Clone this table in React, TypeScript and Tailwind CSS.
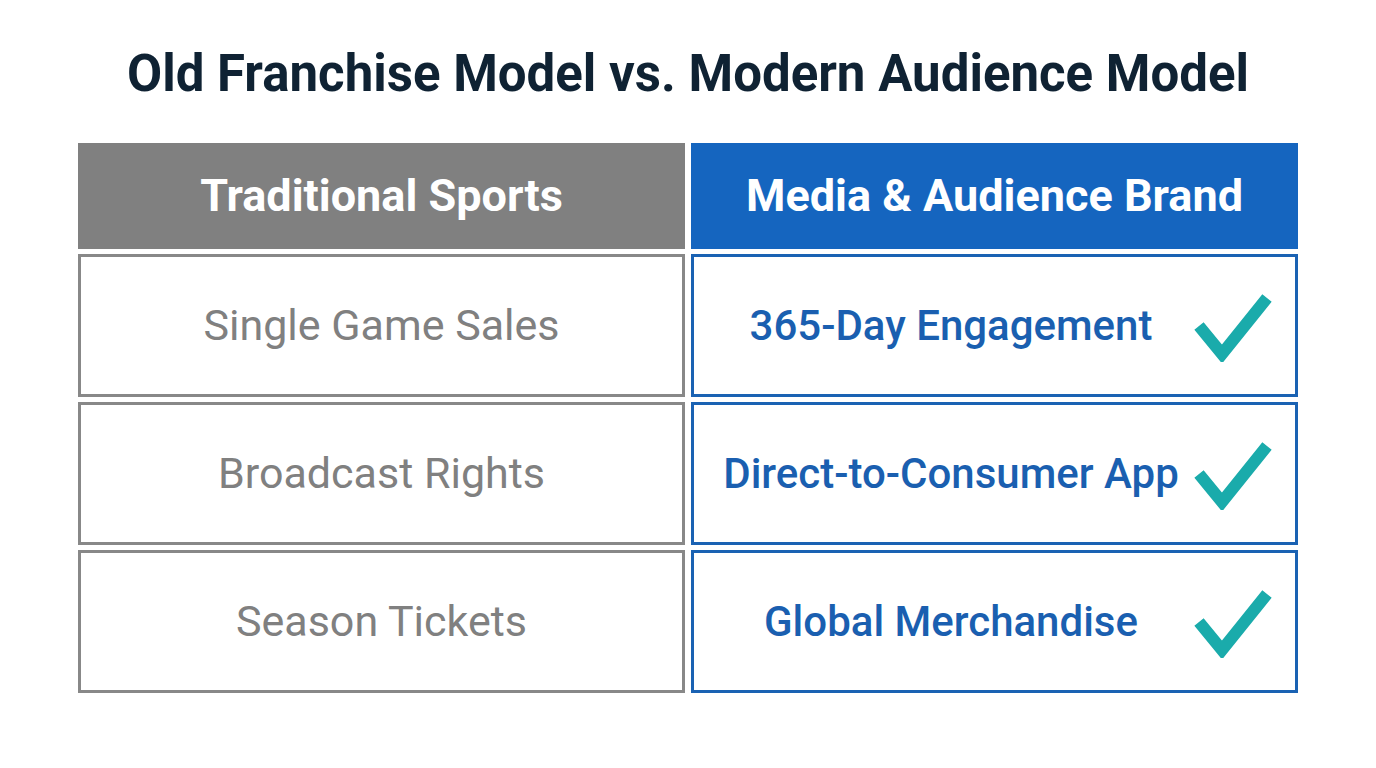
import React from 'react'

const rows = [
  { old: 'Single Game Sales', modern: '365-Day Engagement' },
  { old: 'Broadcast Rights', modern: 'Direct-to-Consumer App' },
  { old: 'Season Tickets', modern: 'Global Merchandise' },
]

function Check() {
  return (
    <svg width="80" height="72" viewBox="0 0 80 72" className="shrink-0">
      <path
        d="M6 36 L29 64 L74 8"
        fill="none"
        stroke="#1aabab"
        strokeWidth="12"
        strokeLinejoin="miter"
      />
    </svg>
  )
}

export default function App() {
  return (
    <main
      className="flex h-[768px] w-[1376px] flex-col items-center bg-white"
      style={{ fontFamily: 'Roboto, "Liberation Sans", sans-serif' }}
    >
      <h1 className="mt-[40px] text-[51px] font-bold leading-[68px] text-[#0f2233]">
        Old Franchise Model vs. Modern Audience Model
      </h1>

      <div className="mt-[35px] grid w-[1220px] grid-cols-2 gap-x-[6px] gap-y-[5px]">
        <div className="flex h-[106px] items-center justify-center bg-[#808080] text-[45px] font-bold text-white">
          Traditional Sports
        </div>
        <div className="flex h-[106px] items-center justify-center bg-[#1565bf] text-[45px] font-bold text-white">
          Media &amp; Audience Brand
        </div>

        {rows.map((r) => (
          <React.Fragment key={r.old}>
            <div className="flex h-[143px] items-center justify-center border-[3px] border-[#888888] text-[43px] font-normal text-[#808080]">
              {r.old}
            </div>
            <div className="flex h-[143px] items-center border-[3px] border-[#1a62b3]">
              <div className="flex-1 whitespace-nowrap pl-[15px] text-center text-[42px] font-medium text-[#1a5fb0]">
                {r.modern}
              </div>
              <div className="mr-[22px]">
                <Check />
              </div>
            </div>
          </React.Fragment>
        ))}
      </div>
    </main>
  )
}
